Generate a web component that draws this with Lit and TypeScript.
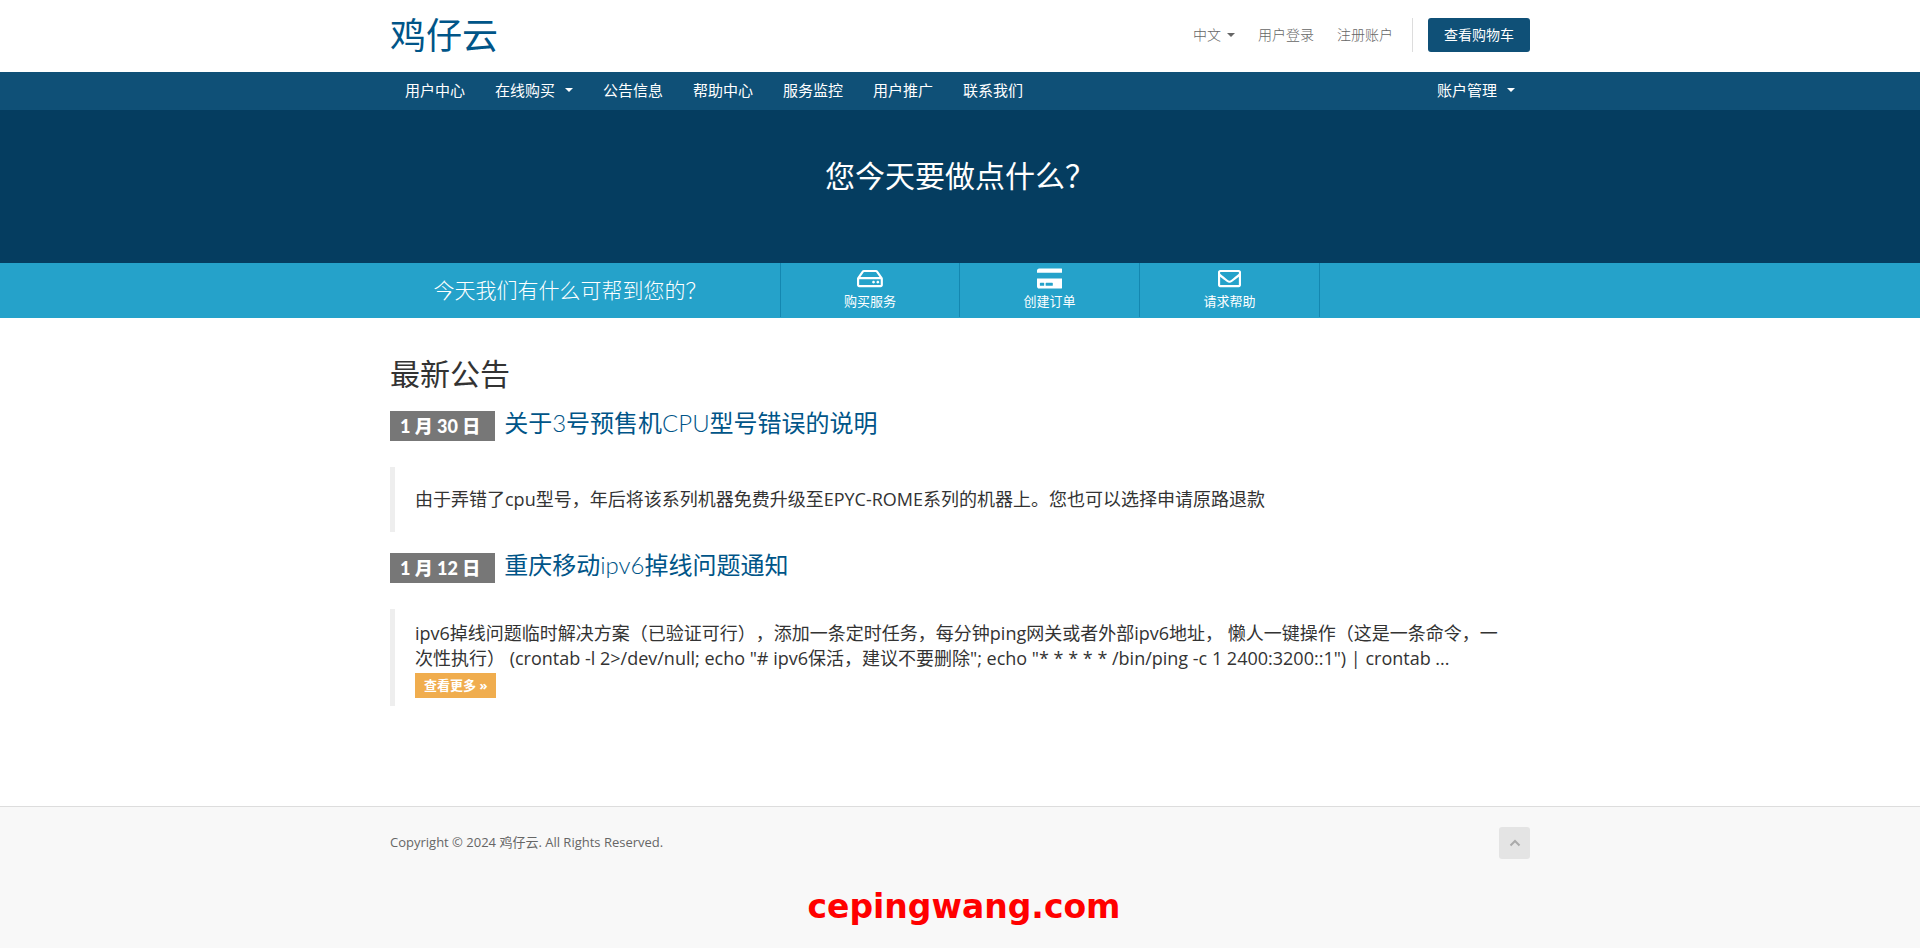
import { LitElement, html, css, svg } from "lit";
import { customElement } from "lit/decorators.js";

interface Shortcut {
  label: string;
  width: number;
  path: string;
}

interface Announcement {
  date: string;
  title: string;
  body: string;
  more: boolean;
}

const SHORTCUTS: Shortcut[] = [
  {
    label: "购买服务",
    width: 576,
    path: "M567.403 235.642L462.323 84.589A48 48 0 0 0 422.919 64H153.081a48 48 0 0 0-39.404 20.589L8.597 235.642A48.001 48.001 0 0 0 0 263.054V400c0 26.51 21.49 48 48 48h480c26.51 0 48-21.49 48-48V263.054c0-9.801-3-19.366-8.597-27.412zM153.081 112h269.838l77.913 112H75.168l77.913-112zM528 400H48V272h480v128zm-32-64c0 17.673-14.327 32-32 32s-32-14.327-32-32 14.327-32 32-32 32 14.327 32 32zm-96 0c0 17.673-14.327 32-32 32s-32-14.327-32-32 14.327-32 32-32 32 14.327 32 32z",
  },
  {
    label: "创建订单",
    width: 576,
    path: "M0 432c0 26.5 21.5 48 48 48h480c26.5 0 48-21.5 48-48V256H0v176zm192-68c0-6.6 5.4-12 12-12h136c6.6 0 12 5.4 12 12v40c0 6.6-5.4 12-12 12H204c-6.6 0-12-5.4-12-12v-40zm-128 0c0-6.6 5.4-12 12-12h72c6.6 0 12 5.4 12 12v40c0 6.6-5.4 12-12 12H76c-6.6 0-12-5.4-12-12v-40zM576 80v48H0V80c0-26.5 21.5-48 48-48h480c26.5 0 48 21.5 48 48z",
  },
  {
    label: "请求帮助",
    width: 512,
    path: "M464 64H48C21.49 64 0 85.49 0 112v288c0 26.51 21.49 48 48 48h416c26.51 0 48-21.49 48-48V112c0-26.51-21.49-48-48-48zm0 48v40.805c-22.422 18.259-58.168 46.651-134.587 106.49-16.841 13.247-50.201 45.072-73.413 44.701-23.208.375-56.579-31.459-73.413-44.701C106.18 199.465 70.425 171.067 48 152.805V112h416zM48 400V214.398c22.914 18.251 55.409 43.862 104.938 82.646 21.857 17.205 60.134 55.186 103.062 54.955 42.717.231 80.509-37.199 103.053-54.947 49.528-38.783 82.032-64.401 104.947-82.653V400H48z",
  },
];

const MENU = ["用户中心", "在线购买", "公告信息", "帮助中心", "服务监控", "用户推广", "联系我们"];

const NEWS: Announcement[] = [
  {
    date: "1 月 30 日",
    title: "关于3号预售机CPU型号错误的说明",
    body: "由于弄错了cpu型号，年后将该系列机器免费升级至EPYC-ROME系列的机器上。您也可以选择申请原路退款",
    more: false,
  },
  {
    date: "1 月 12 日",
    title: "重庆移动ipv6掉线问题通知",
    body: 'ipv6掉线问题临时解决方案（已验证可行），添加一条定时任务，每分钟ping网关或者外部ipv6地址， 懒人一键操作（这是一条命令，一次性执行） (crontab -l 2>/dev/null; echo "# ipv6保活，建议不要删除"; echo "* * * * * /bin/ping -c 1 2400:3200::1") | crontab ...',
    more: true,
  },
];

@customElement("app-root")
export class AppRoot extends LitElement {
  static styles = css`
    :host {
      display: flex;
      flex-direction: column;
      min-height: 100vh;
      background: #fff;
      color: #333;
      font: 14px/20px "Open Sans", "Noto Sans CJK SC", sans-serif;
      text-spacing-trim: space-all;
    }
    * {
      box-sizing: border-box;
    }
    a {
      color: inherit;
      text-decoration: none;
    }
    h1,
    h2,
    h3,
    p,
    ul {
      margin: 0;
      padding: 0;
      font-weight: 400;
      list-style: none;
    }
    .container {
      width: 100%;
      max-width: 1170px;
      margin: 0 auto;
      padding: 0 15px;
    }
    .caret {
      display: inline-block;
      border: 4px solid transparent;
      border-top-color: currentColor;
      border-bottom: 0;
      vertical-align: middle;
    }
    .header {
      display: flex;
      justify-content: space-between;
      align-items: center;
      height: 72px;
    }
    .logo {
      padding-bottom: 6px;
      color: #058;
      font: 400 36px/66px "Noto Sans CJK SC", sans-serif;
    }
    .top-nav {
      display: flex;
      align-items: center;
      gap: 23px;
      color: #777;
      font-weight: 300;
      line-height: 34px;
      padding-bottom: 2px;
    }
    .language {
      display: flex;
      align-items: center;
      gap: 6px;
      padding: 0;
      border: 0;
      background: none;
      color: inherit;
      font: inherit;
    }
    .top-link,
    .language {
      color: #666;
    }
    .cart {
      display: flex;
      margin-left: -4px;
      padding-left: 15px;
      border-left: 1px solid #ddd;
    }
    .cart-link {
      padding: 0 16px;
      border-radius: 3px;
      background: #0f5077;
      color: #fff;
      font-weight: 400;
    }
    .menu {
      padding-bottom: 2px;
      background: #0f5077;
      color: #fff;
      font-size: 15px;
      line-height: 36px;
    }
    .menu-row,
    .menu-list {
      display: flex;
      justify-content: space-between;
    }
    .menu-link {
      display: flex;
      align-items: center;
      gap: 10px;
      padding: 0 15px;
    }
    .banner {
      padding: 46px 15px 67px;
      background: #053d60;
      color: #fff;
      text-align: center;
    }
    .banner-title {
      font-size: 30px;
      line-height: 40px;
    }
    .shortcuts {
      background: #25a2ca;
      color: #fff;
      padding-bottom: 1px;
    }
    .shortcuts-row {
      display: flex;
    }
    .lead {
      flex: 0 1 390px;
      padding-right: 30px;
      font-size: 21px;
      font-weight: 300;
      line-height: 54px;
      text-align: center;
    }
    .shortcut-list {
      display: grid;
      grid-template-columns: repeat(3, 180px);
    }
    .shortcut-item {
      border-right: 1px solid #1487b0;
    }
    .shortcut-item:first-child {
      border-left: 1px solid #1487b0;
    }
    .shortcut {
      display: flex;
      flex-direction: column;
      align-items: center;
      gap: 1px;
      height: 54px;
      padding-top: 4px;
      font-size: 13px;
      line-height: 20px;
    }
    .shortcut-icon {
      display: block;
      height: 23px;
      fill: currentColor;
    }
    .main {
      padding-top: 37px;
      padding-bottom: 79px;
    }
    .heading {
      font: 400 30px/34px "Noto Sans CJK SC", sans-serif;
      margin-bottom: 22px;
    }
    .news-title {
      display: flex;
      align-items: center;
      gap: 9px;
      height: 30px;
      color: #058;
      font: 400 24px/26px "Lato Light", Lato, "Noto Sans CJK SC", sans-serif;
    }
    .news-link {
      padding-bottom: 6px;
    }
    .date {
      padding: 0 15px 0 10px;
      background: #777;
      color: #fff;
      font-family: Lato, "Noto Sans CJK SC", sans-serif;
      font-size: 18px;
      font-weight: 900;
      line-height: 30px;
    }
    .quote {
      margin: 26px 0 21px;
      padding: 20px;
      border-left: 5px solid #eee;
      font-size: 18px;
      font-weight: 300;
      line-height: 25px;
    }
    .quote.long {
      padding: 12px 20px 8px;
    }
    .more {
      display: table;
      margin-top: 2px;
      padding: 0 9px;
      background: #f0ad4e;
      color: #fff;
      font-size: 13px;
      font-weight: 700;
      line-height: 25px;
    }
    .footer {
      flex: 1;
      border-top: 1px solid #ddd;
      background: #f8f8f8;
      color: #666;
      font-size: 13px;
    }
    .footer-row {
      display: flex;
      justify-content: space-between;
      padding-top: 20px;
    }
    .copyright {
      line-height: 30px;
    }
    .to-top {
      display: grid;
      place-items: center;
      width: 31px;
      height: 32px;
      border-radius: 3px;
      background: #e4e4e4;
      color: #aaa;
    }
    .chevron {
      width: 12px;
      height: 8px;
      fill: none;
      stroke: currentColor;
      stroke-width: 2;
    }
    .site {
      margin: 28px 0 0 8px;
      color: #f00;
      font: 700 33px/40px "DejaVu Sans", sans-serif;
      text-align: center;
    }
  `;

  private renderShortcut(item: Shortcut) {
    return html`<li class="shortcut-item">
      <a class="shortcut" href="#">
        <svg class="shortcut-icon" viewBox="0 0 ${item.width} 512" aria-hidden="true">
          ${svg`<path d=${item.path}></path>`}
        </svg>
        ${item.label}
      </a>
    </li>`;
  }

  private renderNews(item: Announcement) {
    return html`<article>
      <h3 class="news-title"><span class="date">${item.date}</span><a class="news-link" href="#">${item.title}</a></h3>
      <div class="quote ${item.more ? "long" : ""}">
        <p>${item.body}</p>
        ${item.more ? html`<a class="more" href="#">查看更多 »</a>` : ""}
      </div>
    </article>`;
  }

  render() {
    return html`
      <header class="container header">
        <a class="logo" href="#">鸡仔云</a>
        <nav class="top-nav">
          <button class="language" type="button">中文<span class="caret"></span></button>
          <a class="top-link" href="#">用户登录</a>
          <a class="top-link" href="#">注册账户</a>
          <div class="cart"><a class="cart-link" href="#">查看购物车</a></div>
        </nav>
      </header>
      <nav class="menu">
        <div class="container menu-row">
          <ul class="menu-list">
            ${MENU.map(
              (label, i) => html`<li>
                <a class="menu-link" href="#">${label}${i === 1 ? html`<span class="caret"></span>` : ""}</a>
              </li>`
            )}
          </ul>
          <a class="menu-link" href="#">账户管理<span class="caret"></span></a>
        </div>
      </nav>
      <section class="banner"><h1 class="banner-title">您今天要做点什么？</h1></section>
      <section class="shortcuts">
        <div class="container shortcuts-row">
          <p class="lead">今天我们有什么可帮到您的？</p>
          <ul class="shortcut-list">
            ${SHORTCUTS.map((s) => this.renderShortcut(s))}
          </ul>
        </div>
      </section>
      <main class="container main">
        <h2 class="heading">最新公告</h2>
        ${NEWS.map((n) => this.renderNews(n))}
      </main>
      <footer class="footer">
        <div class="container footer-row">
          <p class="copyright">Copyright © 2024 鸡仔云. All Rights Reserved.</p>
          <a class="to-top" href="#" aria-label="返回顶部">
            <svg class="chevron" viewBox="0 0 12 8"><path d="M1.5 6.5 6 2l4.5 4.5"></path></svg>
          </a>
        </div>
        <p class="site">cepingwang.com</p>
      </footer>
    `;
  }
}
